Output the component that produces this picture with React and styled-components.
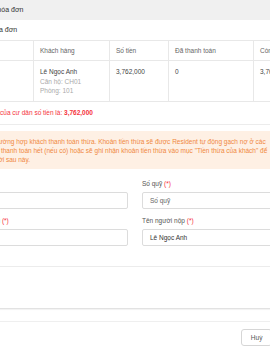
import React from 'react'
import styled, { createGlobalStyle } from 'styled-components'

const GlobalStyle = createGlobalStyle`
  html, body {
    margin: 0;
    padding: 0;
    background: #fff;
    overflow: hidden;
  }
  body {
    font-family: "Liberation Sans", Arial, sans-serif;
  }
`;

const Modal = styled.div`
  width: 374px;
  margin-left: -52px;
  background: #fff;
`;

const Header = styled.div`
  height: 20px;
  line-height: 20px;
  padding: 0 12px;
  background: #f0f0f0;
  color: #333;
  font-size: 7px;
  white-space: nowrap;
`;

const Body = styled.div`
  padding: 5px 12px 0;
`;

const SectionTitle = styled.div`
  font-size: 7px;
  line-height: 9px;
  color: #333;
  margin-bottom: 6px;
  white-space: nowrap;
`;

const Table = styled.table`
  width: 100%;
  border-collapse: collapse;
  table-layout: fixed;
  font-size: 6.5px;

  th {
    height: 19px;
    padding: 0 6px;
    border: 1px solid #e8e8e8;
    text-align: left;
    font-weight: normal;
    color: #666;
    white-space: nowrap;
    overflow: hidden;
  }

  td {
    padding: 6px 6px 5px;
    border: 1px solid #e8e8e8;
    vertical-align: top;
    line-height: 9.5px;
    color: #444;
    white-space: nowrap;
    overflow: hidden;
  }
`;

const Sub = styled.div`
  color: #aaa;
`;

const RedNote = styled.div`
  margin-top: 6px;
  font-size: 6.5px;
  line-height: 9px;
  color: #f5323c;
  white-space: nowrap;

  b {
    font-weight: bold;
  }
`;

const Divider = styled.div`
  height: 1px;
  background: ${p => p.$strong ? '#e2e2e2' : '#ececec'};
  margin-top: ${p => p.$gap}px;
  box-shadow: ${p => p.$strong ? '0 1px 1px #f0f0f0' : 'none'};
`;

const Alert = styled.div`
  margin-top: 6px;
  padding: 6px 10px 5px 16px;
  background: #fef0e4;
  color: #f0883d;
  font-size: 6.5px;
  line-height: 9px;
  white-space: nowrap;
`;

const Form = styled.div`
  margin-top: 10.5px;
  display: grid;
  grid-template-columns: 1fr 1fr;
  column-gap: 14px;
  row-gap: 7.5px;
`;

const Field = styled.div`
  display: flex;
  flex-direction: column;
`;

const Label = styled.label`
  font-size: 6.5px;
  line-height: 9px;
  color: #555;
  margin-bottom: 3.5px;
  white-space: nowrap;

  span {
    color: #f5323c;
  }
`;

const Input = styled.div`
  box-sizing: border-box;
  height: 17px;
  padding: 0 7px;
  border: 1px solid #dcdcdc;
  border-radius: 2px;
  font-size: 6.5px;
  line-height: 15px;
  color: ${p => p.$placeholder ? '#666' : '#333'};
`;

const Footer = styled.div`
  margin-top: 12px;
  border-top: 1px solid #efefef;
  padding: 7px 12px;
  display: flex;
  justify-content: flex-end;
  gap: 6px;
`;

const Button = styled.button`
  box-sizing: border-box;
  height: 17px;
  padding: 0 9px;
  border: 1px solid ${p => p.$primary ? '#1890ff' : '#d6d6d6'};
  border-radius: 3px;
  background: ${p => p.$primary ? '#1890ff' : '#fff'};
  color: ${p => p.$primary ? '#fff' : '#555'};
  font-family: inherit;
  font-size: 6.5px;
`;

export default function App() {
  return (
    <>
      <GlobalStyle />
      <Modal>
        <Header>Thanh toán hóa đơn</Header>
        <Body>
          <SectionTitle>Thông tin hóa đơn</SectionTitle>
          <Table>
            <colgroup>
              <col style={{ width: 73 }} />
              <col style={{ width: 76 }} />
              <col style={{ width: 59 }} />
              <col style={{ width: 85 }} />
              <col style={{ width: 57 }} />
            </colgroup>
            <thead>
              <tr>
                <th>STT</th>
                <th>Khách hàng</th>
                <th>Số tiền</th>
                <th>Đã thanh toán</th>
                <th>Còn lại</th>
              </tr>
            </thead>
            <tbody>
              <tr>
                <td>1</td>
                <td>
                  Lê Ngọc Anh
                  <Sub>Căn hộ: CH01</Sub>
                  <Sub>Phòng: 101</Sub>
                </td>
                <td>3,762,000</td>
                <td>0</td>
                <td>3,762,000</td>
              </tr>
            </tbody>
          </Table>
          <RedNote>Tổng tiền nợ&ensp;của cư dân số tiền là: <b>3,762,000</b></RedNote>
          <Divider $gap={7} />
          <Alert>
            Trong trường hợp khách thanh toán thừa. Khoản tiền thừa sẽ được Resident tự động gạch nợ ở các<br />
            kỳ chưa thanh toán hết (nếu có) hoặc sẽ ghi nhận khoản tiền thừa vào mục "Tiền thừa của khách" để<br />
            trừ lần tới sau này.
          </Alert>
          <Form>
            <Field>
              <Label>Mã phiếu</Label>
              <Input />
            </Field>
            <Field>
              <Label>Số quỹ <span>(*)</span></Label>
              <Input $placeholder>Số quỹ</Input>
            </Field>
            <Field>
              <Label>Ngày nộp tiền <span>(*)</span></Label>
              <Input />
            </Field>
            <Field>
              <Label>Tên người nộp <span>(*)</span></Label>
              <Input>Lê Ngọc Anh</Input>
            </Field>
          </Form>
          <Divider $gap={20} />
          <Divider $gap={41} $strong />
        </Body>
        <Footer>
          <Button>Huỷ</Button>
          <Button $primary>Lưu</Button>
        </Footer>
      </Modal>
    </>
  )
}
